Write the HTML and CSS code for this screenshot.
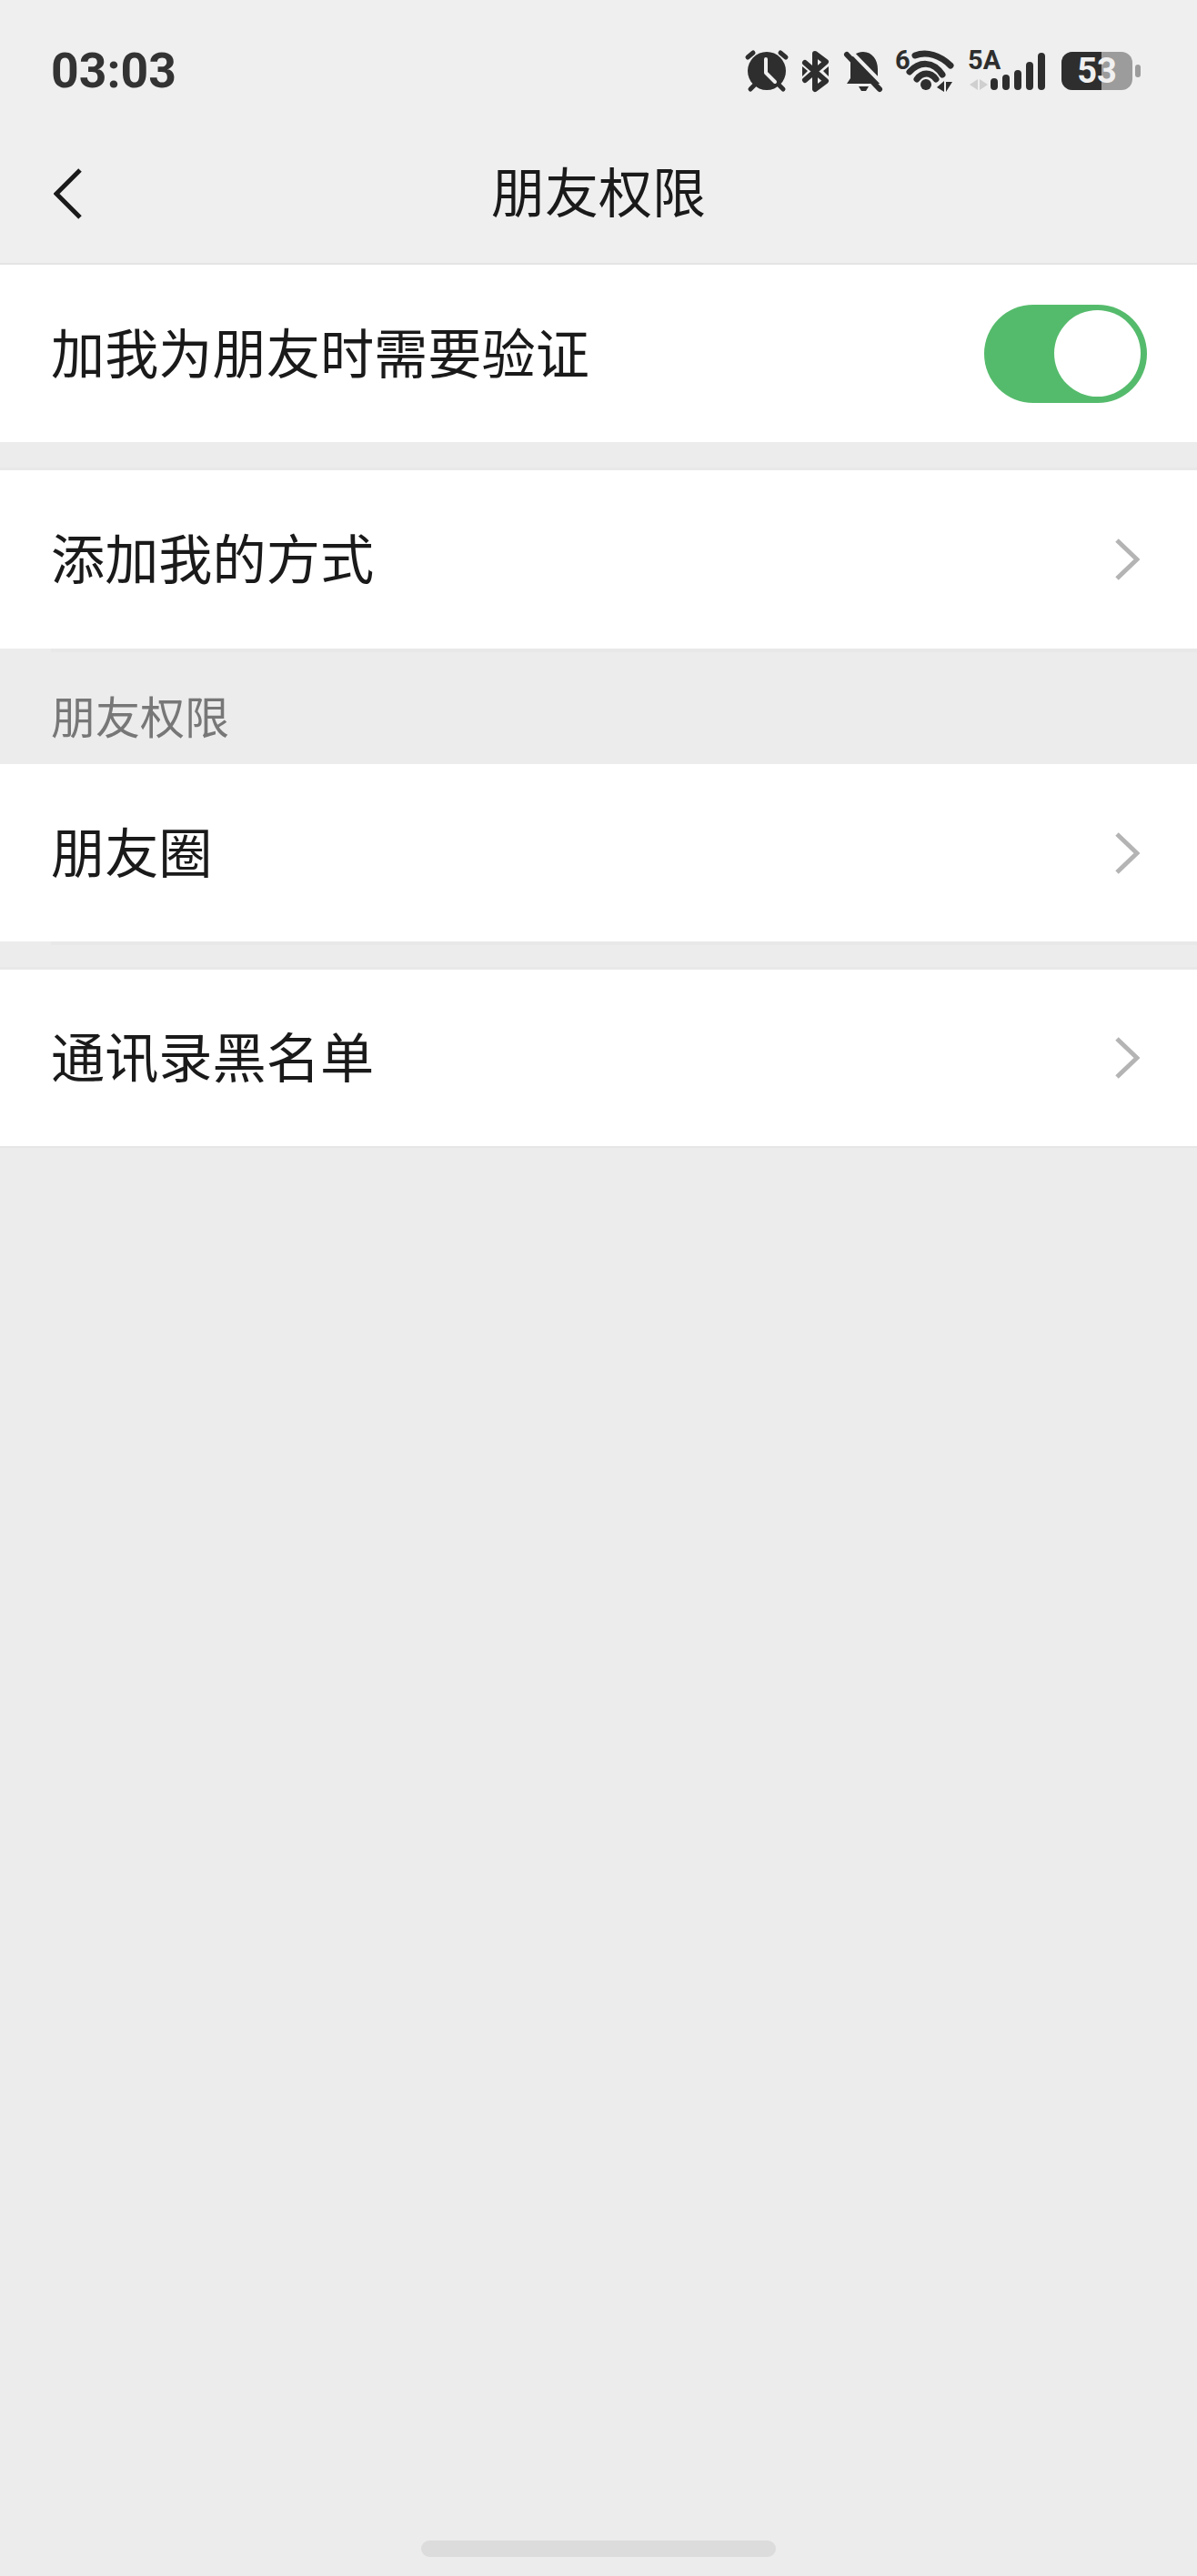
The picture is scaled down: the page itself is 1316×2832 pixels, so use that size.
FILE: index.html
```html
<!DOCTYPE html>
<html lang="zh-CN">
<head>
<meta charset="utf-8">
<title>朋友权限</title>
<link rel="stylesheet" href="styles.css">
</head>
<body>
<div class="page">
  <!-- Status bar -->
  <div class="status-bar">
    <span class="time">03:03</span>
    <div class="status-icons">
      <svg class="ic ic-alarm" viewBox="820 56 46 44">
        <circle cx="844" cy="78" r="21" fill="#2e2e2e"/>
        <path d="M843 65V80L853 90" fill="none" stroke="#efefef" stroke-width="4" stroke-linecap="round" stroke-linejoin="round"/>
        <path d="M823 63L829 58M859 58L865 63M826 98L830 94M858 94L862 98" fill="none" stroke="#2e2e2e" stroke-width="5" stroke-linecap="round"/>
      </svg>
      <svg class="ic ic-bluetooth" viewBox="882 56 30 44">
        <path d="M886 69L909 89L897 98V59L909 68L886 88" fill="none" stroke="#2e2e2e" stroke-width="6" stroke-linejoin="round" stroke-linecap="round"/>
        <path d="M883 73L889 78L883 84ZM912 73L906 78L912 84Z" fill="#2e2e2e"/>
      </svg>
      <svg class="ic ic-bell" viewBox="928 56 42 44">
        <path d="M950 57C960 57 966 66 966 76V86L970 92H932L936 86V70C936 62 942 57 950 57Z" fill="#2e2e2e"/>
        <path d="M945 95H956L953 100H948Z" fill="#2e2e2e"/>
        <path d="M936 56L976 97" fill="none" stroke="#efefef" stroke-width="4"/>
        <path d="M932 60L968 98" fill="none" stroke="#2e2e2e" stroke-width="6" stroke-linecap="round"/>
      </svg>
      <svg class="ic ic-wifi" viewBox="986 56 63 46">
        <text class="ic-num" x="985" y="77">6</text>
        <path d="M1007 62C1020 57 1035 62 1046 73" fill="none" stroke="#2e2e2e" stroke-width="7" stroke-linecap="round"/>
        <path d="M1001 80C1012 68 1027 68 1037 83" fill="none" stroke="#2e2e2e" stroke-width="7" stroke-linecap="round"/>
        <path d="M1009 88C1015 80 1024 80 1030 88" fill="none" stroke="#2e2e2e" stroke-width="7" stroke-linecap="round"/>
        <circle cx="1019" cy="94" r="6" fill="#2e2e2e"/>
        <path d="M1039 90V102L1031 97ZM1041 91H1048L1041 102Z" fill="#2e2e2e"/>
      </svg>
      <svg class="ic ic-signal" viewBox="1065 56 85 44">
        <text class="ic-num" x="1065" y="76">5A</text>
        <path d="M1076 87V99L1067 93ZM1078 87V99L1087 93Z" fill="#cfcfcf"/>
        <path d="M1094 90V95M1107 86V95M1120 81V95M1133 72V95M1146 62V95" fill="none" stroke="#2e2e2e" stroke-width="8" stroke-linecap="round"/>
      </svg>
      <div class="battery">
        <div class="battery-body">
          <span class="battery-level"></span>
          <span class="battery-num">53</span>
        </div>
        <span class="battery-nub"></span>
      </div>
    </div>
  </div>

  <!-- Nav bar -->
  <div class="nav-bar">
    <svg class="back" viewBox="0 0 32 58">
      <path d="M29 3L3 29L29 55" fill="none" stroke="#1a1a1a" stroke-width="5"/>
    </svg>
    <span class="nav-title">朋友权限</span>
  </div>

  <div class="content">
    <div class="row">
      <span class="row-text">加我为朋友时需要验证</span>
      <div class="switch"><span class="switch-knob"></span></div>
    </div>

    <div class="row row-top has-line">
      <span class="row-text">添加我的方式</span>
      <svg class="chevron" viewBox="0 0 28 46"><path d="M3 2L25 23L3 44" fill="none" stroke="#b4b4b4" stroke-width="5"/></svg>
    </div>

    <div class="section-title">朋友权限</div>

    <div class="row row-first has-line">
      <span class="row-text">朋友圈</span>
      <svg class="chevron" viewBox="0 0 28 46"><path d="M3 2L25 23L3 44" fill="none" stroke="#b4b4b4" stroke-width="5"/></svg>
    </div>

    <div class="row row-top row-last">
      <span class="row-text">通讯录黑名单</span>
      <svg class="chevron" viewBox="0 0 28 46"><path d="M3 2L25 23L3 44" fill="none" stroke="#b4b4b4" stroke-width="5"/></svg>
    </div>
  </div>

  <div class="home-bar"><span class="home-pill"></span></div>
</div>
</body>
</html>
```

FILE: styles.css
```css
* {
  box-sizing: border-box;
}

body {
  margin: 0;
  background-color: #ececec;
  font-family: "Noto Sans CJK SC", "Noto Sans", sans-serif;
  color: #1a1a1a;
}

.page {
  display: flex;
  flex-direction: column;
  height: 2832px;
  overflow: hidden;
}

/* Status bar */
.status-bar {
  display: flex;
  align-items: center;
  justify-content: space-between;
  height: 156px;
  padding: 0 62px 0 56px;
  background-color: #efefef;
}

.time {
  font-family: Roboto, sans-serif;
  font-size: 53.5px;
  font-weight: 700;
  line-height: 1;
  color: #333;
}

.status-icons {
  display: flex;
  align-items: center;
  gap: 16px;
}

.ic {
  display: block;
  height: 44px;
  overflow: visible;
}

.ic-alarm { width: 46px; }
.ic-bluetooth { width: 30px; }
.ic-bell { width: 42px; }
.ic-wifi { width: 63px; height: 46px; }
.ic-signal { width: 85px; }

.ic-num {
  font-family: Roboto, sans-serif;
  font-size: 29px;
  font-weight: 700;
  fill: #2e2e2e;
}

.battery {
  display: flex;
  align-items: center;
  gap: 3px;
  margin-left: 2px;
}

.battery-body {
  position: relative;
  display: flex;
  align-items: center;
  justify-content: center;
  width: 78px;
  height: 42px;
  border-radius: 12px;
  background-color: #9c9c9c;
}

.battery-level {
  position: absolute;
  left: 0;
  top: 0;
  bottom: 0;
  width: 44px;
  border-radius: 12px 0 0 12px;
  background-color: #2e2e2e;
}

.battery-num {
  position: relative;
  font-family: Roboto, sans-serif;
  font-size: 38px;
  font-weight: 700;
  line-height: 42px;
  color: #f0f0f0;
}

.battery-nub {
  width: 6px;
  height: 14px;
  border-radius: 3px;
  background-color: #9c9c9c;
}

/* Nav bar */
.nav-bar {
  position: relative;
  display: flex;
  align-items: center;
  justify-content: center;
  height: 135px;
  padding-bottom: 29px;
  background-color: #efefef;
  border-bottom: 2px solid #e4e4e4;
}

.back {
  position: absolute;
  left: 59px;
  top: 28px;
  width: 32px;
  height: 58px;
}

.nav-title {
  font-size: 59px;
  line-height: 1;
}

/* List rows */
.content {
  display: flex;
  flex-direction: column;
  flex: 1;
}

.row {
  position: relative;
  display: flex;
  align-items: center;
  justify-content: space-between;
  height: 195px;
  padding: 0 63px 0 56px;
  background-color: #fff;
}

.row-top {
  margin-top: 28px;
  border-top: 3px solid #e8e8e8;
  height: 199px;
}

.row-last {
  margin-top: 28px;
  border-bottom: 2px solid #e6e6e6;
}

.has-line::after {
  content: "";
  position: absolute;
  left: 56px;
  right: 0;
  top: 100%;
  height: 4px;
  background-color: #e8e8e8;
}

.row-text {
  padding-bottom: 6px;
  font-size: 59.2px;
  line-height: 1;
}

.chevron {
  display: block;
  width: 28px;
  height: 46px;
}

.section-title {
  display: flex;
  align-items: center;
  height: 127px;
  padding: 18px 0 0 56px;
  font-size: 49px;
  line-height: 1;
  color: #777;
}

/* Switch */
.switch {
  display: flex;
  align-items: center;
  justify-content: flex-end;
  width: 179px;
  height: 108px;
  margin-right: -8px;
  padding-right: 7px;
  border-radius: 54px;
  background-color: #55bb6c;
}

.switch-knob {
  width: 95px;
  height: 95px;
  border-radius: 50%;
  background-color: #fff;
}

/* Home indicator */
.home-bar {
  display: flex;
  justify-content: center;
  padding-bottom: 21px;
}

.home-pill {
  width: 390px;
  height: 18px;
  border-radius: 9px;
  background-color: #dcdcdc;
}
```
